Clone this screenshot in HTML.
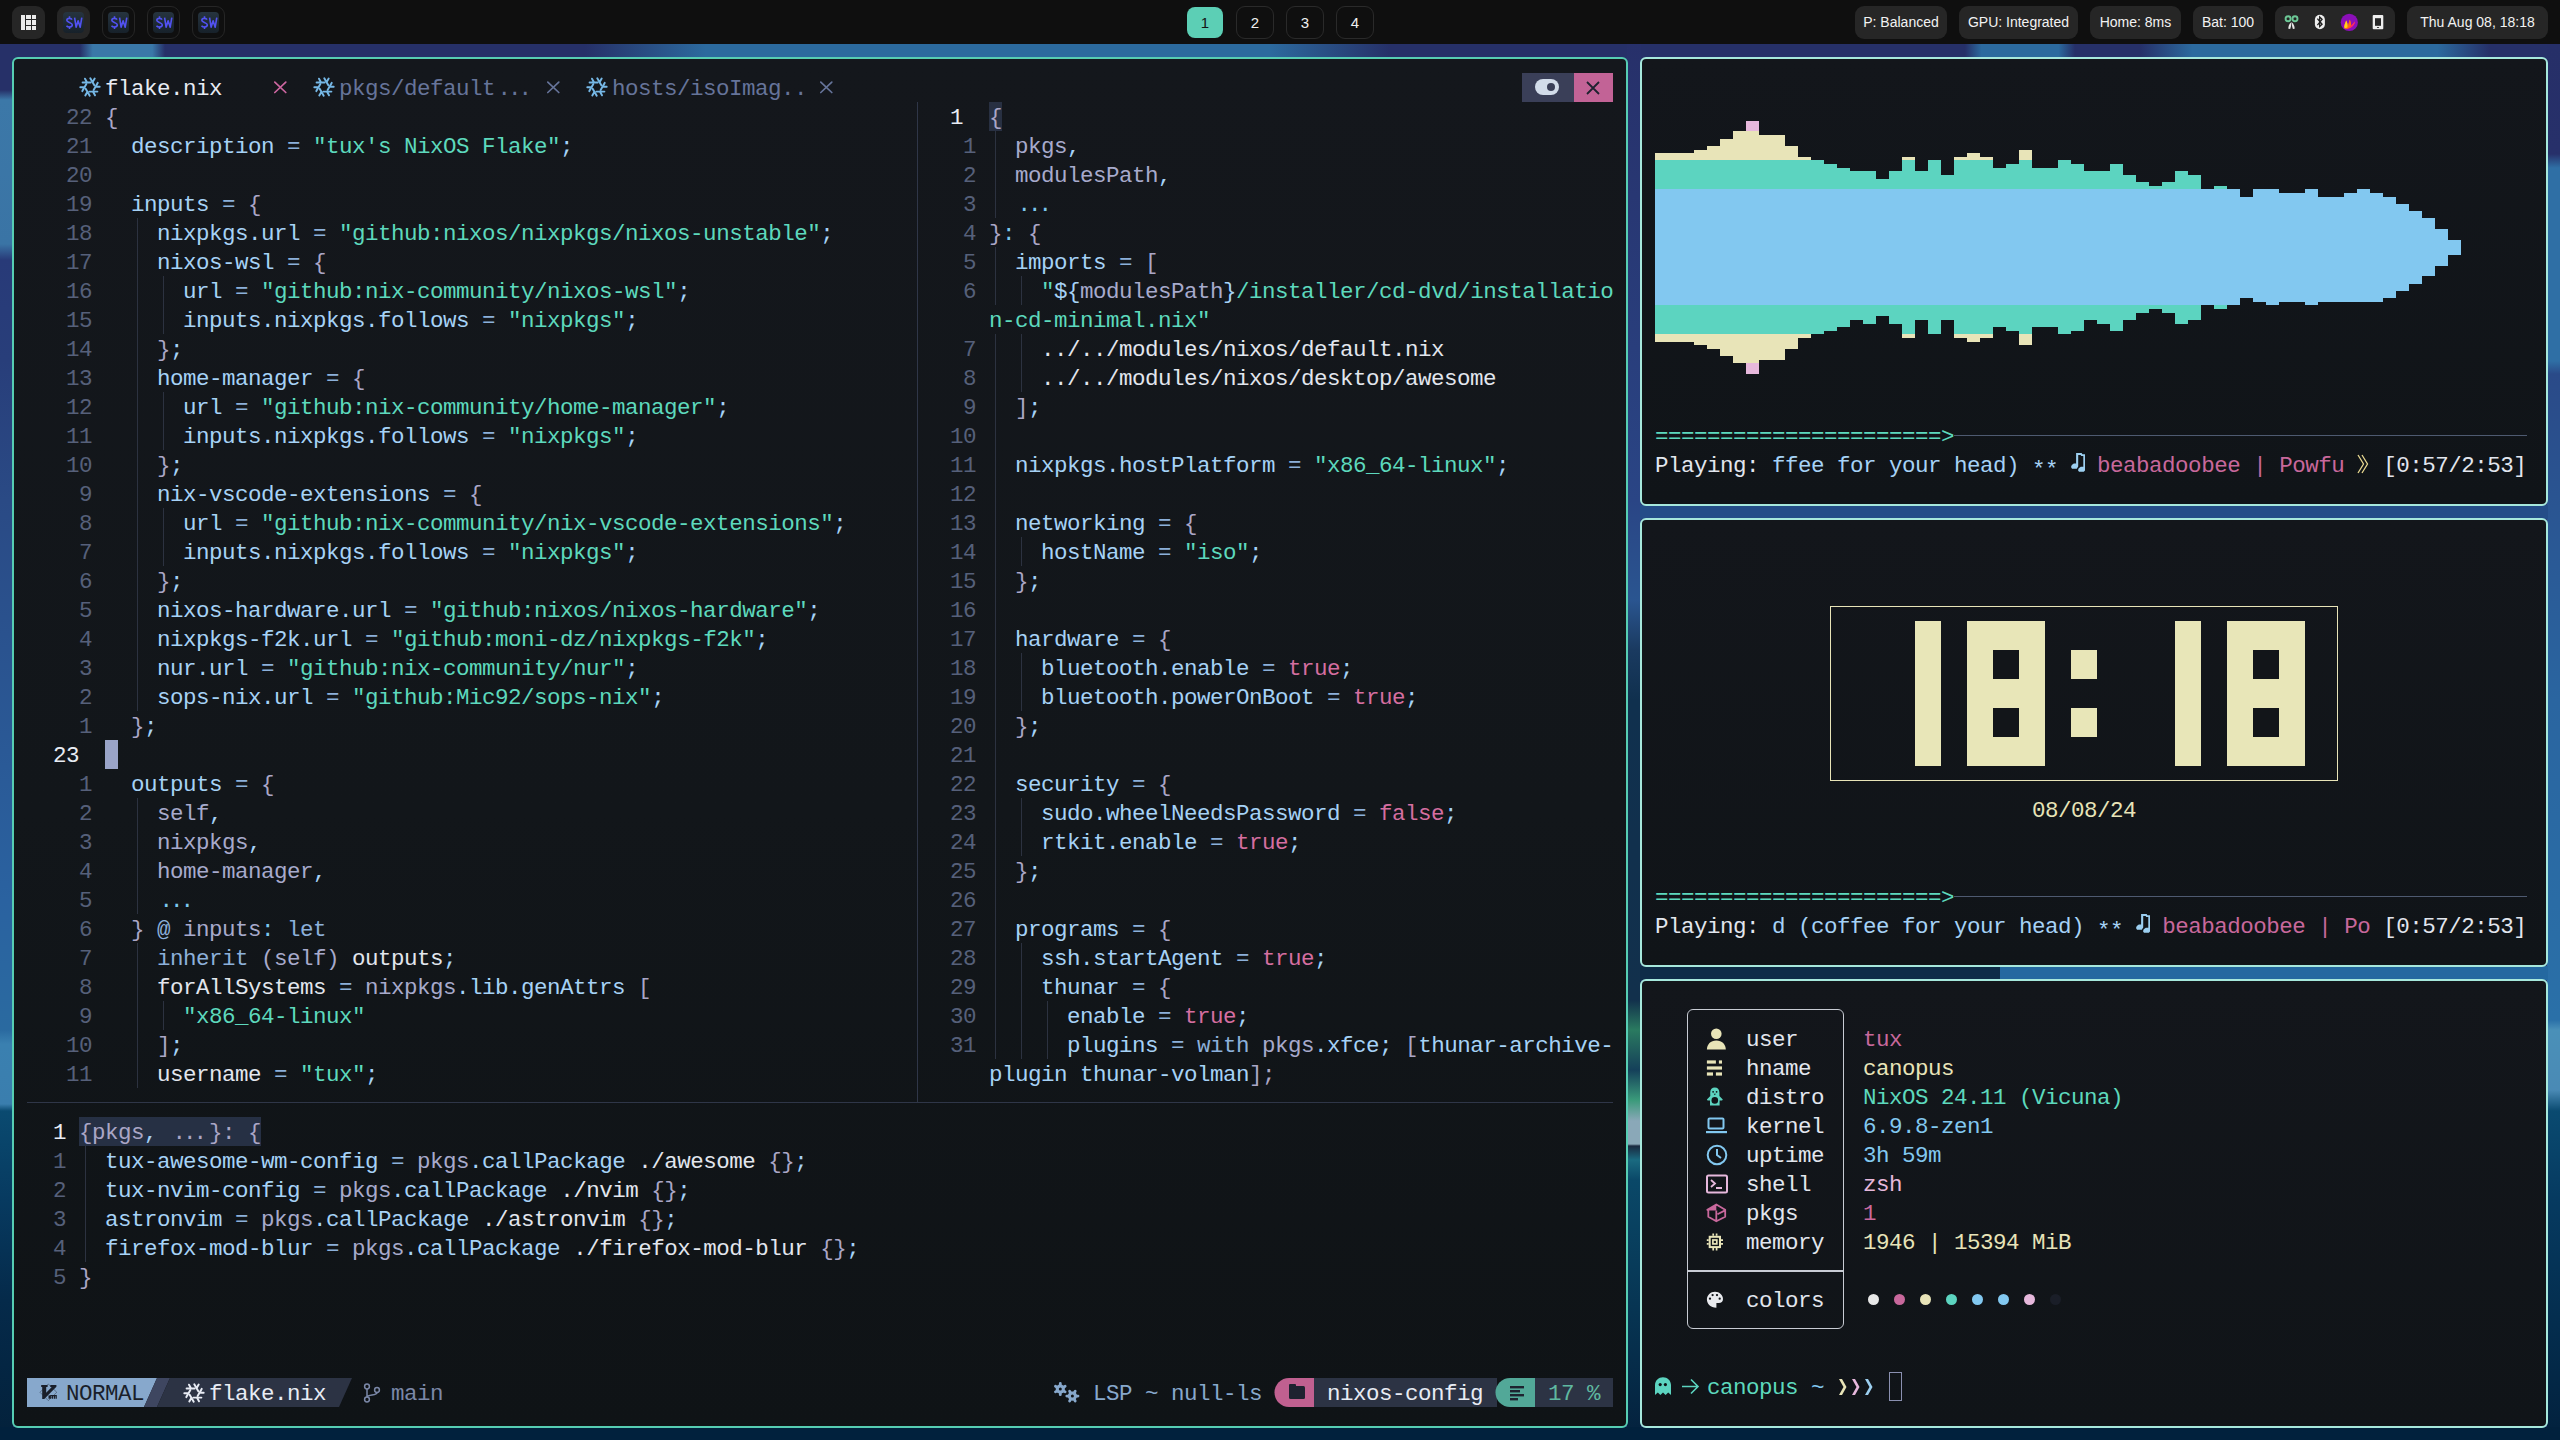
<!DOCTYPE html>
<html><head><meta charset="utf-8"><style>
*{margin:0;padding:0;box-sizing:border-box}
html,body{width:2560px;height:1440px;overflow:hidden;background:#0f0f0f}
body{position:relative;font-family:"Liberation Mono",monospace}
.tx{position:absolute;white-space:pre;font-size:22.5px;letter-spacing:-0.5px;padding-top:1.5px;line-height:29px;height:29px;font-family:"Liberation Mono",monospace}
.win{position:absolute;border:2px solid #56cdb3;border-radius:6px;background:#121519;overflow:hidden}
.sans{font-family:"Liberation Sans",sans-serif}
.lig{padding-left:2.5px;letter-spacing:-3px;margin-right:5px}
.X{color:#a6d2f6;position:relative;top:4px}
.a{color:#a6d2f6}.p{color:#a7aacc}.s{color:#5dd9bd}.o{color:#8cb0da}.b{color:#aaa6c6}.q{color:#d56ea0}.w{color:#e2e6ee}.e{color:#7cc8ee}.n{color:#56607a}.c{color:#e8ecf4}.y{color:#e8e4b8}.k{color:#c8689c}.l{color:#e6b8dc}.u{color:#82c8f0}.g{color:#7b88a8}.d{color:#1a1f2a}.v{color:#87a8cc}.G{color:#66749a}.z{color:#5fb8a0}</style></head>
<body>
<div style="position:absolute;left:0;top:44px;width:2560px;height:1396px;background:#263068"></div>
<div style="position:absolute;left:80px;top:44px;width:85px;height:14px;background:linear-gradient(90deg,#263068,#3a78a8 15%,#3a78a8 85%,#263068);"></div>
<div style="position:absolute;left:585px;top:44px;width:805px;height:14px;background:linear-gradient(90deg,#263068,#2c6a9e 15%,#2c6a9e 85%,#263068);"></div>
<div style="position:absolute;left:1965px;top:44px;width:110px;height:14px;background:linear-gradient(90deg,#263068,#2c6a9e 15%,#2c6a9e 85%,#263068);"></div>
<div style="position:absolute;left:2140px;top:44px;width:350px;height:14px;background:linear-gradient(90deg,#263068,#2c6a9e 15%,#2c6a9e 85%,#263068);"></div>
<div style="position:absolute;left:0px;top:44px;width:13px;height:1396px;background:linear-gradient(180deg,#263068 0px,#263068 46px,#3c78a8 56px,#3a74a5 200px,#283a78 216px,#283e7a 316px,#2a4a85 456px,#2a62a0 856px,#2a6aa0 986px,#3a80b0 1000px,#3a7eae 1060px,#0a4a70 1067px,#073a60 1156px,#052a4a 1256px,#03213b 1396px);"></div>
<div style="position:absolute;left:1627px;top:44px;width:14px;height:1396px;background:linear-gradient(180deg,#27306a 0px,#2a4585 456px,#2a5590 556px,#1a3a60 606px,#10304e 656px,#12304c 956px,#2a7a60 986px,#15405a 1026px,#3a9a7a 1056px,#8aa8b8 1077px,#8aa8b8 1100px,#1a2a40 1102px,#1a6a80 1116px,#0a4868 1136px,#04213d 1396px);"></div>
<div style="position:absolute;left:2547px;top:44px;width:13px;height:1396px;background:linear-gradient(180deg,#262f68 0px,#27306a 110px,#2f6fa5 124px,#2f6fa5 317px,#2a4a88 330px,#2a65a0 656px,#2a70a8 976px,#4a90b8 986px,#4a8ab5 1046px,#0a4a70 1067px,#063a60 1156px,#02213d 1396px);"></div>
<div style="position:absolute;left:1640px;top:505px;width:908px;height:14px;background:#244d88;"></div>
<div style="position:absolute;left:1640px;top:966px;width:360px;height:14px;background:#0e2c48;"></div>
<div style="position:absolute;left:2000px;top:966px;width:548px;height:14px;background:#2468a0;"></div>
<div style="position:absolute;left:0px;top:1427px;width:2560px;height:13px;background:#01213d;"></div>
<div style="position:absolute;left:0;top:0;width:2560px;height:44px;background:#0f0f0f"></div>
<div style="position:absolute;left:12px;top:6px;width:33px;height:33px;border-radius:9px;background:#262626"></div>
<div style="position:absolute;left:20.7px;top:14.8px;width:4.4px;height:15.4px;background:#ececec;"></div>
<div style="position:absolute;left:26.1px;top:14.8px;width:4.8px;height:4.6px;background:#ececec;"></div>
<div style="position:absolute;left:31.8px;top:14.8px;width:4.5px;height:4.6px;background:#ececec;"></div>
<div style="position:absolute;left:26.1px;top:20.4px;width:4.8px;height:4.6px;background:#ececec;"></div>
<div style="position:absolute;left:31.8px;top:20.4px;width:4.5px;height:4.6px;background:#ececec;"></div>
<div style="position:absolute;left:26.1px;top:25.8px;width:4.8px;height:4.6px;background:#ececec;"></div>
<div style="position:absolute;left:31.8px;top:25.8px;width:4.5px;height:4.6px;background:#ececec;"></div>
<div style="position:absolute;left:57px;top:6px;width:33px;height:33px;border-radius:9px;background:#262626"></div>
<div style="position:absolute;left:63px;top:12px;width:21px;height:21px;border-radius:4px;background:linear-gradient(180deg,#26343f,#17212a)"></div>
<svg style="position:absolute;left:63px;top:12px" width="21" height="21" viewBox="0 0 21 21"><path d="M9 7.6 C8.2 5.9 4 5.8 3.8 8.3 C3.6 10.6 9.2 10.2 9.3 12.8 C9.4 15.4 4.9 15.5 3.5 13.7 M6.5 4.3 V6.1 M6.5 15.1 V17" fill="none" stroke="#5252f2" stroke-width="1.6"/><path d="M11.6 5.6 L13.1 15.2 L15.1 8.8 L17.2 15.2 L18.8 5.6" fill="none" stroke="#5252f2" stroke-width="1.6" stroke-linejoin="round"/></svg>
<div style="position:absolute;left:102px;top:6px;width:33px;height:33px;border-radius:9px;border:1px solid #262626"></div>
<div style="position:absolute;left:108px;top:12px;width:21px;height:21px;border-radius:4px;background:linear-gradient(180deg,#26343f,#17212a)"></div>
<svg style="position:absolute;left:108px;top:12px" width="21" height="21" viewBox="0 0 21 21"><path d="M9 7.6 C8.2 5.9 4 5.8 3.8 8.3 C3.6 10.6 9.2 10.2 9.3 12.8 C9.4 15.4 4.9 15.5 3.5 13.7 M6.5 4.3 V6.1 M6.5 15.1 V17" fill="none" stroke="#5252f2" stroke-width="1.6"/><path d="M11.6 5.6 L13.1 15.2 L15.1 8.8 L17.2 15.2 L18.8 5.6" fill="none" stroke="#5252f2" stroke-width="1.6" stroke-linejoin="round"/></svg>
<div style="position:absolute;left:147px;top:6px;width:33px;height:33px;border-radius:9px;border:1px solid #262626"></div>
<div style="position:absolute;left:153px;top:12px;width:21px;height:21px;border-radius:4px;background:linear-gradient(180deg,#26343f,#17212a)"></div>
<svg style="position:absolute;left:153px;top:12px" width="21" height="21" viewBox="0 0 21 21"><path d="M9 7.6 C8.2 5.9 4 5.8 3.8 8.3 C3.6 10.6 9.2 10.2 9.3 12.8 C9.4 15.4 4.9 15.5 3.5 13.7 M6.5 4.3 V6.1 M6.5 15.1 V17" fill="none" stroke="#5252f2" stroke-width="1.6"/><path d="M11.6 5.6 L13.1 15.2 L15.1 8.8 L17.2 15.2 L18.8 5.6" fill="none" stroke="#5252f2" stroke-width="1.6" stroke-linejoin="round"/></svg>
<div style="position:absolute;left:192px;top:6px;width:33px;height:33px;border-radius:9px;border:1px solid #262626"></div>
<div style="position:absolute;left:198px;top:12px;width:21px;height:21px;border-radius:4px;background:linear-gradient(180deg,#26343f,#17212a)"></div>
<svg style="position:absolute;left:198px;top:12px" width="21" height="21" viewBox="0 0 21 21"><path d="M9 7.6 C8.2 5.9 4 5.8 3.8 8.3 C3.6 10.6 9.2 10.2 9.3 12.8 C9.4 15.4 4.9 15.5 3.5 13.7 M6.5 4.3 V6.1 M6.5 15.1 V17" fill="none" stroke="#5252f2" stroke-width="1.6"/><path d="M11.6 5.6 L13.1 15.2 L15.1 8.8 L17.2 15.2 L18.8 5.6" fill="none" stroke="#5252f2" stroke-width="1.6" stroke-linejoin="round"/></svg>
<div class="sans" style="position:absolute;left:1187px;top:7px;width:36px;height:31px;border-radius:8px;background:#5ccfb5;color:#151515;font-size:15px;line-height:31px;text-align:center">1</div>
<div class="sans" style="position:absolute;left:1236px;top:6px;width:38px;height:33px;border-radius:9px;border:1px solid #2a2a2a;color:#f0f0f0;font-size:15px;line-height:31px;text-align:center">2</div>
<div class="sans" style="position:absolute;left:1286px;top:6px;width:38px;height:33px;border-radius:9px;border:1px solid #2a2a2a;color:#f0f0f0;font-size:15px;line-height:31px;text-align:center">3</div>
<div class="sans" style="position:absolute;left:1336px;top:6px;width:38px;height:33px;border-radius:9px;border:1px solid #2a2a2a;color:#f0f0f0;font-size:15px;line-height:31px;text-align:center">4</div>
<div class="sans" style="position:absolute;left:1855px;top:6px;width:92px;height:33px;border-radius:9px;background:#262626;color:#f2f2f2;font-size:14px;line-height:32px;text-align:center">P: Balanced</div>
<div class="sans" style="position:absolute;left:1959px;top:6px;width:119px;height:33px;border-radius:9px;background:#262626;color:#f2f2f2;font-size:14px;line-height:32px;text-align:center">GPU: Integrated</div>
<div class="sans" style="position:absolute;left:2090px;top:6px;width:91px;height:33px;border-radius:9px;background:#262626;color:#f2f2f2;font-size:14px;line-height:32px;text-align:center">Home: 8ms</div>
<div class="sans" style="position:absolute;left:2193px;top:6px;width:70px;height:33px;border-radius:9px;background:#262626;color:#f2f2f2;font-size:14px;line-height:32px;text-align:center">Bat: 100</div>
<div class="sans" style="position:absolute;left:2407px;top:6px;width:141px;height:33px;border-radius:9px;background:#262626;color:#f2f2f2;font-size:14px;line-height:32px;text-align:center">Thu Aug 08, 18:18</div>
<div style="position:absolute;left:2275px;top:6px;width:120px;height:33px;border-radius:9px;background:#262626"></div>
<svg style="position:absolute;left:2275px;top:6px" width="120" height="34" viewBox="0 0 120 34">
<circle cx="13.1" cy="12.7" r="2.5" fill="none" stroke="#6cc896" stroke-width="1.9"/><circle cx="20" cy="12.7" r="2.5" fill="none" stroke="#6cc896" stroke-width="1.9"/>
<path d="M13.3 22.8 Q13.2 18.6 16.4 15.9 Q16.4 19.6 15.2 22.9 Z" fill="#e6e6e6"/><path d="M19.6 22.8 Q19.8 18.8 16.6 15.9 Q16.8 19.8 17.9 22.9 Z" fill="#e6e6e6"/>
<rect x="39.9" y="8.7" width="10" height="14.5" rx="5" fill="#eeeeee"/>
<path d="M42.4 12.6 L47.1 18.3 L44.7 20.6 V11 L47.1 13.4 L42.4 19.2" fill="none" stroke="#1e1e1e" stroke-width="1.3"/>
<circle cx="74.3" cy="16.4" r="8.6" fill="#8b0fb8"/>
<path d="M69.6 22.6 C68.6 20 70 17.5 71.2 14.5 C72.3 16.4 72.8 18 72.6 20 C73.6 18 74 15.6 74.6 13.6 C76.1 15.6 76.3 18 75.9 19.8 C77.3 18.6 78.6 17 79.8 15.5 C79.6 19.5 76.5 22 72 22.9 Z" fill="#ff6a10"/>
<path d="M69.6 22.6 C68.6 20 70 17.5 71.2 14.5 C72.3 16.4 72.9 18.6 72.4 21.5 Z" fill="#ffd21a"/>
<path d="M75.5 20.2 C77 18.8 78.6 17 79.8 15.5 C79.6 19.2 77 21.6 73.5 22.5 Z" fill="#ff1a78"/>
<rect x="97.7" y="8.9" width="10.6" height="14.3" rx="1" fill="#eeeeee"/>
<rect x="100" y="12.2" width="6" height="7.6" fill="#262626"/><ellipse cx="103" cy="21.5" rx="1.2" ry="0.6" fill="#262626"/>
</svg>
<div class="win" style="left:12px;top:57px;width:1616px;height:1371px;border-color:#56cdb3;background:linear-gradient(180deg,#14171c,#12161a 55%,#0f1316)"></div>
<div class="win" style="left:1640px;top:57px;width:908px;height:449px;border-color:#a6e8dc;background:linear-gradient(180deg,#13161b,#101418)"></div>
<div class="win" style="left:1640px;top:518px;width:908px;height:449px;border-color:#a6e8dc;background:linear-gradient(180deg,#13161b,#101418)"></div>
<div class="win" style="left:1640px;top:979px;width:908px;height:449px;border-color:#a6e8dc;background:linear-gradient(180deg,#13161b,#101418)"></div>
<div style="position:absolute;left:137px;top:218px;width:1px;height:493px;background:#2c3240;"></div>
<div style="position:absolute;left:163px;top:276px;width:1px;height:58px;background:#2c3240;"></div>
<div style="position:absolute;left:163px;top:392px;width:1px;height:58px;background:#2c3240;"></div>
<div style="position:absolute;left:163px;top:508px;width:1px;height:58px;background:#2c3240;"></div>
<div style="position:absolute;left:137px;top:798px;width:1px;height:116px;background:#2c3240;"></div>
<div style="position:absolute;left:137px;top:943px;width:1px;height:145px;background:#2c3240;"></div>
<div style="position:absolute;left:163px;top:1001px;width:1px;height:29px;background:#2c3240;"></div>
<div style="position:absolute;left:995px;top:131px;width:1px;height:87px;background:#2c3240;"></div>
<div style="position:absolute;left:995px;top:247px;width:1px;height:58px;background:#2c3240;"></div>
<div style="position:absolute;left:995px;top:334px;width:1px;height:725px;background:#2c3240;"></div>
<div style="position:absolute;left:1021px;top:276px;width:1px;height:29px;background:#2c3240;"></div>
<div style="position:absolute;left:1021px;top:334px;width:1px;height:58px;background:#2c3240;"></div>
<div style="position:absolute;left:1021px;top:537px;width:1px;height:29px;background:#2c3240;"></div>
<div style="position:absolute;left:1021px;top:653px;width:1px;height:58px;background:#2c3240;"></div>
<div style="position:absolute;left:1021px;top:798px;width:1px;height:58px;background:#2c3240;"></div>
<div style="position:absolute;left:1021px;top:943px;width:1px;height:116px;background:#2c3240;"></div>
<div style="position:absolute;left:1047px;top:1001px;width:1px;height:58px;background:#2c3240;"></div>
<div style="position:absolute;left:85px;top:1146px;width:1px;height:116px;background:#2c3240;"></div>
<div style="position:absolute;left:917px;top:102px;width:1px;height:1000px;background:#2f3648;"></div>
<div style="position:absolute;left:27px;top:1102px;width:1586px;height:1px;background:#2f3648;"></div>
<div style="position:absolute;left:989px;top:102px;width:13px;height:29px;background:#283042;"></div>
<div style="position:absolute;left:79px;top:1117px;width:182px;height:29px;background:#263044;"></div>
<div style="position:absolute;left:105px;top:740px;width:13px;height:29px;background:#9aa4c8;"></div>
<div class="tx" style="left:66px;top:102px"><span class="n">22</span></div>
<div class="tx" style="left:105px;top:102px"><span class="b">{</span></div>
<div class="tx" style="left:66px;top:131px"><span class="n">21</span></div>
<div class="tx" style="left:105px;top:131px">  <span class="a">description </span><span class="o">= </span><span class="s">"tux's NixOS Flake"</span><span class="a">;</span></div>
<div class="tx" style="left:66px;top:160px"><span class="n">20</span></div>
<div class="tx" style="left:66px;top:189px"><span class="n">19</span></div>
<div class="tx" style="left:105px;top:189px">  <span class="a">inputs </span><span class="o">= </span><span class="b">{</span></div>
<div class="tx" style="left:66px;top:218px"><span class="n">18</span></div>
<div class="tx" style="left:105px;top:218px">    <span class="a">nixpkgs.url </span><span class="o">= </span><span class="s">"github:nixos/nixpkgs/nixos-unstable"</span><span class="a">;</span></div>
<div class="tx" style="left:66px;top:247px"><span class="n">17</span></div>
<div class="tx" style="left:105px;top:247px">    <span class="a">nixos-wsl </span><span class="o">= </span><span class="b">{</span></div>
<div class="tx" style="left:66px;top:276px"><span class="n">16</span></div>
<div class="tx" style="left:105px;top:276px">      <span class="a">url </span><span class="o">= </span><span class="s">"github:nix-community/nixos-wsl"</span><span class="a">;</span></div>
<div class="tx" style="left:66px;top:305px"><span class="n">15</span></div>
<div class="tx" style="left:105px;top:305px">      <span class="a">inputs.nixpkgs.follows </span><span class="o">= </span><span class="s">"nixpkgs"</span><span class="a">;</span></div>
<div class="tx" style="left:66px;top:334px"><span class="n">14</span></div>
<div class="tx" style="left:105px;top:334px">    <span class="b">}</span><span class="a">;</span></div>
<div class="tx" style="left:66px;top:363px"><span class="n">13</span></div>
<div class="tx" style="left:105px;top:363px">    <span class="a">home-manager </span><span class="o">= </span><span class="b">{</span></div>
<div class="tx" style="left:66px;top:392px"><span class="n">12</span></div>
<div class="tx" style="left:105px;top:392px">      <span class="a">url </span><span class="o">= </span><span class="s">"github:nix-community/home-manager"</span><span class="a">;</span></div>
<div class="tx" style="left:66px;top:421px"><span class="n">11</span></div>
<div class="tx" style="left:105px;top:421px">      <span class="a">inputs.nixpkgs.follows </span><span class="o">= </span><span class="s">"nixpkgs"</span><span class="a">;</span></div>
<div class="tx" style="left:66px;top:450px"><span class="n">10</span></div>
<div class="tx" style="left:105px;top:450px">    <span class="b">}</span><span class="a">;</span></div>
<div class="tx" style="left:79px;top:479px"><span class="n">9</span></div>
<div class="tx" style="left:105px;top:479px">    <span class="a">nix-vscode-extensions </span><span class="o">= </span><span class="b">{</span></div>
<div class="tx" style="left:79px;top:508px"><span class="n">8</span></div>
<div class="tx" style="left:105px;top:508px">      <span class="a">url </span><span class="o">= </span><span class="s">"github:nix-community/nix-vscode-extensions"</span><span class="a">;</span></div>
<div class="tx" style="left:79px;top:537px"><span class="n">7</span></div>
<div class="tx" style="left:105px;top:537px">      <span class="a">inputs.nixpkgs.follows </span><span class="o">= </span><span class="s">"nixpkgs"</span><span class="a">;</span></div>
<div class="tx" style="left:79px;top:566px"><span class="n">6</span></div>
<div class="tx" style="left:105px;top:566px">    <span class="b">}</span><span class="a">;</span></div>
<div class="tx" style="left:79px;top:595px"><span class="n">5</span></div>
<div class="tx" style="left:105px;top:595px">    <span class="a">nixos-hardware.url </span><span class="o">= </span><span class="s">"github:nixos/nixos-hardware"</span><span class="a">;</span></div>
<div class="tx" style="left:79px;top:624px"><span class="n">4</span></div>
<div class="tx" style="left:105px;top:624px">    <span class="a">nixpkgs-f2k.url </span><span class="o">= </span><span class="s">"github:moni-dz/nixpkgs-f2k"</span><span class="a">;</span></div>
<div class="tx" style="left:79px;top:653px"><span class="n">3</span></div>
<div class="tx" style="left:105px;top:653px">    <span class="a">nur.url </span><span class="o">= </span><span class="s">"github:nix-community/nur"</span><span class="a">;</span></div>
<div class="tx" style="left:79px;top:682px"><span class="n">2</span></div>
<div class="tx" style="left:105px;top:682px">    <span class="a">sops-nix.url </span><span class="o">= </span><span class="s">"github:Mic92/sops-nix"</span><span class="a">;</span></div>
<div class="tx" style="left:79px;top:711px"><span class="n">1</span></div>
<div class="tx" style="left:105px;top:711px">  <span class="b">}</span><span class="a">;</span></div>
<div class="tx" style="left:53px;top:740px"><span class="c">23</span></div>
<div class="tx" style="left:79px;top:769px"><span class="n">1</span></div>
<div class="tx" style="left:105px;top:769px">  <span class="a">outputs </span><span class="o">= </span><span class="b">{</span></div>
<div class="tx" style="left:79px;top:798px"><span class="n">2</span></div>
<div class="tx" style="left:105px;top:798px">    <span class="p">self</span><span class="a">,</span></div>
<div class="tx" style="left:79px;top:827px"><span class="n">3</span></div>
<div class="tx" style="left:105px;top:827px">    <span class="p">nixpkgs</span><span class="a">,</span></div>
<div class="tx" style="left:79px;top:856px"><span class="n">4</span></div>
<div class="tx" style="left:105px;top:856px">    <span class="p">home-manager</span><span class="a">,</span></div>
<div class="tx" style="left:79px;top:885px"><span class="n">5</span></div>
<div class="tx" style="left:105px;top:885px">    <span class="e"><span class="lig">...</span></span></div>
<div class="tx" style="left:79px;top:914px"><span class="n">6</span></div>
<div class="tx" style="left:105px;top:914px">  <span class="b">} </span><span class="o">@ </span><span class="p">inputs</span><span class="e">: </span><span class="o">let</span></div>
<div class="tx" style="left:79px;top:943px"><span class="n">7</span></div>
<div class="tx" style="left:105px;top:943px">    <span class="o">inherit </span><span class="p">(self) </span><span class="w">outputs</span><span class="a">;</span></div>
<div class="tx" style="left:79px;top:972px"><span class="n">8</span></div>
<div class="tx" style="left:105px;top:972px">    <span class="w">forAllSystems </span><span class="o">= </span><span class="p">nixpkgs</span><span class="a">.lib.genAttrs </span><span class="b">[</span></div>
<div class="tx" style="left:79px;top:1001px"><span class="n">9</span></div>
<div class="tx" style="left:105px;top:1001px">      <span class="s">"x86_64-linux"</span></div>
<div class="tx" style="left:66px;top:1030px"><span class="n">10</span></div>
<div class="tx" style="left:105px;top:1030px">    <span class="b">]</span><span class="a">;</span></div>
<div class="tx" style="left:66px;top:1059px"><span class="n">11</span></div>
<div class="tx" style="left:105px;top:1059px">    <span class="w">username </span><span class="o">= </span><span class="s">"tux"</span><span class="a">;</span></div>
<div class="tx" style="left:950px;top:102px"><span class="c">1</span></div>
<div class="tx" style="left:989px;top:102px"><span class="b">{</span></div>
<div class="tx" style="left:963px;top:131px"><span class="n">1</span></div>
<div class="tx" style="left:989px;top:131px">  <span class="p">pkgs</span><span class="a">,</span></div>
<div class="tx" style="left:963px;top:160px"><span class="n">2</span></div>
<div class="tx" style="left:989px;top:160px">  <span class="p">modulesPath</span><span class="a">,</span></div>
<div class="tx" style="left:963px;top:189px"><span class="n">3</span></div>
<div class="tx" style="left:989px;top:189px">  <span class="e"><span class="lig">...</span></span></div>
<div class="tx" style="left:963px;top:218px"><span class="n">4</span></div>
<div class="tx" style="left:989px;top:218px"><span class="b">}</span><span class="e">: </span><span class="b">{</span></div>
<div class="tx" style="left:963px;top:247px"><span class="n">5</span></div>
<div class="tx" style="left:989px;top:247px">  <span class="a">imports </span><span class="o">= </span><span class="b">[</span></div>
<div class="tx" style="left:963px;top:276px"><span class="n">6</span></div>
<div class="tx" style="left:989px;top:276px">    <span class="s">"</span><span class="a">${</span><span class="p">modulesPath</span><span class="a">}</span><span class="s">/installer/cd-dvd/installatio</span></div>
<div class="tx" style="left:989px;top:305px"><span class="s">n-cd-minimal.nix"</span></div>
<div class="tx" style="left:963px;top:334px"><span class="n">7</span></div>
<div class="tx" style="left:989px;top:334px">    <span class="w">../../modules/nixos/default.nix</span></div>
<div class="tx" style="left:963px;top:363px"><span class="n">8</span></div>
<div class="tx" style="left:989px;top:363px">    <span class="w">../../modules/nixos/desktop/awesome</span></div>
<div class="tx" style="left:963px;top:392px"><span class="n">9</span></div>
<div class="tx" style="left:989px;top:392px">  <span class="b">]</span><span class="a">;</span></div>
<div class="tx" style="left:950px;top:421px"><span class="n">10</span></div>
<div class="tx" style="left:950px;top:450px"><span class="n">11</span></div>
<div class="tx" style="left:989px;top:450px">  <span class="a">nixpkgs.hostPlatform </span><span class="o">= </span><span class="s">"x86_64-linux"</span><span class="a">;</span></div>
<div class="tx" style="left:950px;top:479px"><span class="n">12</span></div>
<div class="tx" style="left:950px;top:508px"><span class="n">13</span></div>
<div class="tx" style="left:989px;top:508px">  <span class="a">networking </span><span class="o">= </span><span class="b">{</span></div>
<div class="tx" style="left:950px;top:537px"><span class="n">14</span></div>
<div class="tx" style="left:989px;top:537px">    <span class="a">hostName </span><span class="o">= </span><span class="s">"iso"</span><span class="a">;</span></div>
<div class="tx" style="left:950px;top:566px"><span class="n">15</span></div>
<div class="tx" style="left:989px;top:566px">  <span class="b">}</span><span class="a">;</span></div>
<div class="tx" style="left:950px;top:595px"><span class="n">16</span></div>
<div class="tx" style="left:950px;top:624px"><span class="n">17</span></div>
<div class="tx" style="left:989px;top:624px">  <span class="a">hardware </span><span class="o">= </span><span class="b">{</span></div>
<div class="tx" style="left:950px;top:653px"><span class="n">18</span></div>
<div class="tx" style="left:989px;top:653px">    <span class="a">bluetooth.enable </span><span class="o">= </span><span class="q">true</span><span class="a">;</span></div>
<div class="tx" style="left:950px;top:682px"><span class="n">19</span></div>
<div class="tx" style="left:989px;top:682px">    <span class="a">bluetooth.powerOnBoot </span><span class="o">= </span><span class="q">true</span><span class="a">;</span></div>
<div class="tx" style="left:950px;top:711px"><span class="n">20</span></div>
<div class="tx" style="left:989px;top:711px">  <span class="b">}</span><span class="a">;</span></div>
<div class="tx" style="left:950px;top:740px"><span class="n">21</span></div>
<div class="tx" style="left:950px;top:769px"><span class="n">22</span></div>
<div class="tx" style="left:989px;top:769px">  <span class="a">security </span><span class="o">= </span><span class="b">{</span></div>
<div class="tx" style="left:950px;top:798px"><span class="n">23</span></div>
<div class="tx" style="left:989px;top:798px">    <span class="a">sudo.wheelNeedsPassword </span><span class="o">= </span><span class="q">false</span><span class="a">;</span></div>
<div class="tx" style="left:950px;top:827px"><span class="n">24</span></div>
<div class="tx" style="left:989px;top:827px">    <span class="a">rtkit.enable </span><span class="o">= </span><span class="q">true</span><span class="a">;</span></div>
<div class="tx" style="left:950px;top:856px"><span class="n">25</span></div>
<div class="tx" style="left:989px;top:856px">  <span class="b">}</span><span class="a">;</span></div>
<div class="tx" style="left:950px;top:885px"><span class="n">26</span></div>
<div class="tx" style="left:950px;top:914px"><span class="n">27</span></div>
<div class="tx" style="left:989px;top:914px">  <span class="a">programs </span><span class="o">= </span><span class="b">{</span></div>
<div class="tx" style="left:950px;top:943px"><span class="n">28</span></div>
<div class="tx" style="left:989px;top:943px">    <span class="a">ssh.startAgent </span><span class="o">= </span><span class="q">true</span><span class="a">;</span></div>
<div class="tx" style="left:950px;top:972px"><span class="n">29</span></div>
<div class="tx" style="left:989px;top:972px">    <span class="a">thunar </span><span class="o">= </span><span class="b">{</span></div>
<div class="tx" style="left:950px;top:1001px"><span class="n">30</span></div>
<div class="tx" style="left:989px;top:1001px">      <span class="a">enable </span><span class="o">= </span><span class="q">true</span><span class="a">;</span></div>
<div class="tx" style="left:950px;top:1030px"><span class="n">31</span></div>
<div class="tx" style="left:989px;top:1030px">      <span class="a">plugins </span><span class="o">= </span><span class="o">with </span><span class="p">pkgs</span><span class="a">.xfce; </span><span class="b">[</span><span class="a">thunar-archive-</span></div>
<div class="tx" style="left:989px;top:1059px"><span class="a">plugin thunar-volman</span><span class="b">];</span></div>
<div class="tx" style="left:53px;top:1117px"><span class="c">1</span></div>
<div class="tx" style="left:79px;top:1117px"><span class="b">{pkgs</span><span class="a">, </span><span class="b"><span class="lig">...</span>}: {</span></div>
<div class="tx" style="left:53px;top:1146px"><span class="n">1</span></div>
<div class="tx" style="left:79px;top:1146px">  <span class="a">tux-awesome-wm-config </span><span class="o">= </span><span class="p">pkgs</span><span class="a">.callPackage </span><span class="w">./awesome </span><span class="b">{}</span><span class="a">;</span></div>
<div class="tx" style="left:53px;top:1175px"><span class="n">2</span></div>
<div class="tx" style="left:79px;top:1175px">  <span class="a">tux-nvim-config </span><span class="o">= </span><span class="p">pkgs</span><span class="a">.callPackage </span><span class="w">./nvim </span><span class="b">{}</span><span class="a">;</span></div>
<div class="tx" style="left:53px;top:1204px"><span class="n">3</span></div>
<div class="tx" style="left:79px;top:1204px">  <span class="a">astronvim </span><span class="o">= </span><span class="p">pkgs</span><span class="a">.callPackage </span><span class="w">./astronvim </span><span class="b">{}</span><span class="a">;</span></div>
<div class="tx" style="left:53px;top:1233px"><span class="n">4</span></div>
<div class="tx" style="left:79px;top:1233px">  <span class="a">firefox-mod-blur </span><span class="o">= </span><span class="p">pkgs</span><span class="a">.callPackage </span><span class="w">./firefox-mod-blur </span><span class="b">{}</span><span class="a">;</span></div>
<div class="tx" style="left:53px;top:1262px"><span class="n">5</span></div>
<div class="tx" style="left:79px;top:1262px"><span class="b">}</span></div>
<svg style="position:absolute;left:78.5px;top:76.3px" width="22" height="22" viewBox="-11 -11 22 22"><g transform="rotate(0)"><path d="M-7.4 -4.6 L0.7 -4.6 M-2.9 -4.6 L-5 -8.3" stroke="#76b8e6" stroke-width="1.95" stroke-linecap="round" fill="none"/></g><g transform="rotate(60)"><path d="M-7.4 -4.6 L0.7 -4.6 M-2.9 -4.6 L-5 -8.3" stroke="#76b8e6" stroke-width="1.95" stroke-linecap="round" fill="none"/></g><g transform="rotate(120)"><path d="M-7.4 -4.6 L0.7 -4.6 M-2.9 -4.6 L-5 -8.3" stroke="#76b8e6" stroke-width="1.95" stroke-linecap="round" fill="none"/></g><g transform="rotate(180)"><path d="M-7.4 -4.6 L0.7 -4.6 M-2.9 -4.6 L-5 -8.3" stroke="#76b8e6" stroke-width="1.95" stroke-linecap="round" fill="none"/></g><g transform="rotate(240)"><path d="M-7.4 -4.6 L0.7 -4.6 M-2.9 -4.6 L-5 -8.3" stroke="#76b8e6" stroke-width="1.95" stroke-linecap="round" fill="none"/></g><g transform="rotate(300)"><path d="M-7.4 -4.6 L0.7 -4.6 M-2.9 -4.6 L-5 -8.3" stroke="#76b8e6" stroke-width="1.95" stroke-linecap="round" fill="none"/></g></svg>
<div class="tx" style="left:105px;top:73px"><span class="c">flake.nix</span></div>
<svg style="position:absolute;left:268px;top:74px" width="28" height="28" viewBox="268 74 28 28"><path d="M274.8 82.2 L285.8 92.5 M285.8 82.2 L274.8 92.5" stroke="#cc66a0" stroke-width="1.7" stroke-linecap="round"/></svg>
<svg style="position:absolute;left:312.5px;top:76.3px" width="22" height="22" viewBox="-11 -11 22 22"><g transform="rotate(0)"><path d="M-7.4 -4.6 L0.7 -4.6 M-2.9 -4.6 L-5 -8.3" stroke="#76b8e6" stroke-width="1.95" stroke-linecap="round" fill="none"/></g><g transform="rotate(60)"><path d="M-7.4 -4.6 L0.7 -4.6 M-2.9 -4.6 L-5 -8.3" stroke="#76b8e6" stroke-width="1.95" stroke-linecap="round" fill="none"/></g><g transform="rotate(120)"><path d="M-7.4 -4.6 L0.7 -4.6 M-2.9 -4.6 L-5 -8.3" stroke="#76b8e6" stroke-width="1.95" stroke-linecap="round" fill="none"/></g><g transform="rotate(180)"><path d="M-7.4 -4.6 L0.7 -4.6 M-2.9 -4.6 L-5 -8.3" stroke="#76b8e6" stroke-width="1.95" stroke-linecap="round" fill="none"/></g><g transform="rotate(240)"><path d="M-7.4 -4.6 L0.7 -4.6 M-2.9 -4.6 L-5 -8.3" stroke="#76b8e6" stroke-width="1.95" stroke-linecap="round" fill="none"/></g><g transform="rotate(300)"><path d="M-7.4 -4.6 L0.7 -4.6 M-2.9 -4.6 L-5 -8.3" stroke="#76b8e6" stroke-width="1.95" stroke-linecap="round" fill="none"/></g></svg>
<div class="tx" style="left:339px;top:73px"><span class="G">pkgs/default<span class="lig">...</span></span></div>
<svg style="position:absolute;left:541px;top:74px" width="28" height="28" viewBox="268 74 28 28"><path d="M274.8 82.2 L285.8 92.5 M285.8 82.2 L274.8 92.5" stroke="#66749a" stroke-width="1.7" stroke-linecap="round"/></svg>
<svg style="position:absolute;left:585.5px;top:76.3px" width="22" height="22" viewBox="-11 -11 22 22"><g transform="rotate(0)"><path d="M-7.4 -4.6 L0.7 -4.6 M-2.9 -4.6 L-5 -8.3" stroke="#76b8e6" stroke-width="1.95" stroke-linecap="round" fill="none"/></g><g transform="rotate(60)"><path d="M-7.4 -4.6 L0.7 -4.6 M-2.9 -4.6 L-5 -8.3" stroke="#76b8e6" stroke-width="1.95" stroke-linecap="round" fill="none"/></g><g transform="rotate(120)"><path d="M-7.4 -4.6 L0.7 -4.6 M-2.9 -4.6 L-5 -8.3" stroke="#76b8e6" stroke-width="1.95" stroke-linecap="round" fill="none"/></g><g transform="rotate(180)"><path d="M-7.4 -4.6 L0.7 -4.6 M-2.9 -4.6 L-5 -8.3" stroke="#76b8e6" stroke-width="1.95" stroke-linecap="round" fill="none"/></g><g transform="rotate(240)"><path d="M-7.4 -4.6 L0.7 -4.6 M-2.9 -4.6 L-5 -8.3" stroke="#76b8e6" stroke-width="1.95" stroke-linecap="round" fill="none"/></g><g transform="rotate(300)"><path d="M-7.4 -4.6 L0.7 -4.6 M-2.9 -4.6 L-5 -8.3" stroke="#76b8e6" stroke-width="1.95" stroke-linecap="round" fill="none"/></g></svg>
<div class="tx" style="left:612px;top:73px"><span class="G">hosts/isoImag..</span></div>
<svg style="position:absolute;left:814px;top:74px" width="28" height="28" viewBox="268 74 28 28"><path d="M274.8 82.2 L285.8 92.5 M285.8 82.2 L274.8 92.5" stroke="#66749a" stroke-width="1.7" stroke-linecap="round"/></svg>
<div style="position:absolute;left:1522px;top:73px;width:52px;height:29px;background:#3a3f58;"></div>
<div style="position:absolute;left:1574px;top:73px;width:39px;height:29px;background:#c26396;"></div>
<div style="position:absolute;left:1535px;top:79px;width:24px;height:16px;border-radius:8px;background:#d2dcea"></div>
<div style="position:absolute;left:1547px;top:83px;width:8px;height:8px;border-radius:4px;background:#3a3f58"></div>
<svg style="position:absolute;left:1586px;top:81px" width="14" height="14" viewBox="0 0 14 14"><path d="M1 1 L13 13 M13 1 L1 13" stroke="#1e2230" stroke-width="1.8"/></svg>
<svg style="position:absolute;left:0;top:1378px" width="1628" height="29" viewBox="0 0 1628 29">
<polygon points="27,0 157,0 144,29 27,29" fill="#87a8cc"/>
<polygon points="157,0 170,0 157,29 144,29" fill="#3e4660"/>
<polygon points="170,0 352,0 339,29 157,29" fill="#2c3344"/>
<path d="M1289,0 H1314 V29 H1289 A14.5,14.5 0 0 1 1289,0 Z" fill="#c06090"/>
<rect x="1314" y="0" width="183" height="29" fill="#2c3344"/>
<path d="M1510,0 H1535 V29 H1510 A14.5,14.5 0 0 1 1510,0 Z" fill="#52a898"/>
<rect x="1535" y="0" width="78" height="29" fill="#2c3344"/>
<rect x="1289" y="8" width="16" height="13" rx="1.5" fill="#1e2230"/><rect x="1289" y="6" width="7" height="4" rx="1" fill="#1e2230"/>
<rect x="1510" y="8" width="14" height="2.4" fill="#1e2230"/><rect x="1510" y="12" width="10" height="2.4" fill="#1e2230"/>
<rect x="1510" y="16" width="14" height="2.4" fill="#1e2230"/><rect x="1510" y="20" width="8" height="2.4" fill="#1e2230"/>
</svg>
<svg style="position:absolute;left:30px;top:1378px" width="40" height="29" viewBox="0 0 40 29"><polygon points="10,14.3 18.3,6 26.8,14.3 18.3,22.6" fill="none" stroke="#1e2430" stroke-width="0.7" opacity="0.6"/><path d="M11.2 7 H17.6 V9 H16.2 V14.8 L21.8 9 H20.3 V7 H26.4 V8.8 L14.3 21 H12.2 V9 H11.2 Z" fill="#1a1f2a"/><rect x="18.5" y="17.4" width="1.5" height="3.3" fill="#1a1f2a"/><path d="M20.7 20.7 V17.6 H26.2 V20.7 M22.6 17.6 V20.7 M24.5 17.6 V20.7" fill="none" stroke="#1a1f2a" stroke-width="1.2"/></svg>
<div class="tx" style="left:66px;top:1378px"><span class="d">NORMAL</span></div>
<svg style="position:absolute;left:182.5px;top:1381.5px" width="22" height="22" viewBox="-11 -11 22 22"><g transform="rotate(0)"><path d="M-7.4 -4.6 L0.7 -4.6 M-2.9 -4.6 L-5 -8.3" stroke="#e8ecf4" stroke-width="1.95" stroke-linecap="round" fill="none"/></g><g transform="rotate(60)"><path d="M-7.4 -4.6 L0.7 -4.6 M-2.9 -4.6 L-5 -8.3" stroke="#e8ecf4" stroke-width="1.95" stroke-linecap="round" fill="none"/></g><g transform="rotate(120)"><path d="M-7.4 -4.6 L0.7 -4.6 M-2.9 -4.6 L-5 -8.3" stroke="#e8ecf4" stroke-width="1.95" stroke-linecap="round" fill="none"/></g><g transform="rotate(180)"><path d="M-7.4 -4.6 L0.7 -4.6 M-2.9 -4.6 L-5 -8.3" stroke="#e8ecf4" stroke-width="1.95" stroke-linecap="round" fill="none"/></g><g transform="rotate(240)"><path d="M-7.4 -4.6 L0.7 -4.6 M-2.9 -4.6 L-5 -8.3" stroke="#e8ecf4" stroke-width="1.95" stroke-linecap="round" fill="none"/></g><g transform="rotate(300)"><path d="M-7.4 -4.6 L0.7 -4.6 M-2.9 -4.6 L-5 -8.3" stroke="#e8ecf4" stroke-width="1.95" stroke-linecap="round" fill="none"/></g></svg>
<div class="tx" style="left:209px;top:1378px"><span class="c">flake.nix</span></div>
<svg style="position:absolute;left:363px;top:1383px" width="18" height="20" viewBox="0 0 18 20"><circle cx="4" cy="3.5" r="2.4" fill="none" stroke="#7b88a8" stroke-width="1.5"/><circle cx="4" cy="16.5" r="2.4" fill="none" stroke="#7b88a8" stroke-width="1.5"/><circle cx="14" cy="7" r="2.4" fill="none" stroke="#7b88a8" stroke-width="1.5"/><path d="M4 6 V14 M14 9.5 C14 13 5 11 4 14" fill="none" stroke="#7b88a8" stroke-width="1.5"/></svg>
<div class="tx" style="left:391px;top:1378px"><span class="g">main</span></div>
<svg style="position:absolute;left:1048px;top:1378px" width="36" height="30" viewBox="0 0 36 30"><circle cx="12.3" cy="11.1" r="4.6" fill="#87a8cc"/><path d="M12.30 7.30 L12.30 5.50 M15.59 9.20 L17.15 8.30 M15.59 13.00 L17.15 13.90 M12.30 14.90 L12.30 16.70 M9.01 13.00 L7.45 13.90 M9.01 9.20 L7.45 8.30 " stroke="#87a8cc" stroke-width="2.8" stroke-linecap="round"/><circle cx="12.3" cy="11.1" r="1.5" fill="#0f1316"/><circle cx="24.4" cy="18.1" r="4.6" fill="#87a8cc"/><path d="M26.30 14.81 L27.20 13.25 M28.20 18.10 L30.00 18.10 M26.30 21.39 L27.20 22.95 M22.50 21.39 L21.60 22.95 M20.60 18.10 L18.80 18.10 M22.50 14.81 L21.60 13.25 " stroke="#87a8cc" stroke-width="2.8" stroke-linecap="round"/><circle cx="24.4" cy="18.1" r="1.5" fill="#0f1316"/></svg>
<div class="tx" style="left:1093px;top:1378px"><span class="v">LSP ~ null-ls</span></div>
<div class="tx" style="left:1327px;top:1378px"><span class="c">nixos-config</span></div>
<div class="tx" style="left:1548px;top:1378px;color:#5fb8a0">17 %</div>
<svg style="position:absolute;left:0;top:0" width="2560" height="520" viewBox="0 0 2560 520">
<defs><clipPath id="cv"><rect x="1655" y="153" width="13" height="189"/><rect x="1668" y="153" width="13" height="189"/><rect x="1681" y="153" width="13" height="189"/><rect x="1694" y="150" width="13" height="195"/><rect x="1707" y="146" width="13" height="203"/><rect x="1720" y="139" width="13" height="217"/><rect x="1733" y="131" width="13" height="232"/><rect x="1746" y="121" width="13" height="253"/><rect x="1759" y="135" width="13" height="225"/><rect x="1772" y="135" width="13" height="225"/><rect x="1785" y="146" width="13" height="203"/><rect x="1798" y="157" width="13" height="181"/><rect x="1811" y="160" width="13" height="174"/><rect x="1824" y="164" width="13" height="167"/><rect x="1837" y="168" width="13" height="159"/><rect x="1850" y="171" width="13" height="149"/><rect x="1863" y="171" width="13" height="153"/><rect x="1876" y="179" width="13" height="137"/><rect x="1889" y="171" width="13" height="153"/><rect x="1902" y="157" width="13" height="181"/><rect x="1915" y="171" width="13" height="149"/><rect x="1928" y="160" width="13" height="174"/><rect x="1941" y="175" width="13" height="145"/><rect x="1954" y="157" width="13" height="181"/><rect x="1967" y="153" width="13" height="189"/><rect x="1980" y="157" width="13" height="181"/><rect x="1993" y="168" width="13" height="159"/><rect x="2006" y="164" width="13" height="167"/><rect x="2019" y="150" width="13" height="195"/><rect x="2032" y="168" width="13" height="159"/><rect x="2045" y="168" width="13" height="159"/><rect x="2058" y="160" width="13" height="174"/><rect x="2071" y="164" width="13" height="167"/><rect x="2084" y="171" width="13" height="149"/><rect x="2097" y="171" width="13" height="153"/><rect x="2110" y="164" width="13" height="167"/><rect x="2123" y="175" width="13" height="145"/><rect x="2136" y="182" width="13" height="131"/><rect x="2149" y="186" width="13" height="123"/><rect x="2162" y="182" width="13" height="131"/><rect x="2175" y="171" width="13" height="153"/><rect x="2188" y="175" width="13" height="145"/><rect x="2201" y="189" width="13" height="116"/><rect x="2214" y="186" width="13" height="123"/><rect x="2227" y="189" width="13" height="116"/><rect x="2240" y="197" width="13" height="101"/><rect x="2253" y="189" width="13" height="113"/><rect x="2266" y="189" width="13" height="116"/><rect x="2279" y="193" width="13" height="109"/><rect x="2292" y="193" width="13" height="109"/><rect x="2305" y="189" width="13" height="116"/><rect x="2318" y="197" width="13" height="105"/><rect x="2331" y="197" width="13" height="105"/><rect x="2344" y="193" width="13" height="109"/><rect x="2357" y="189" width="13" height="113"/><rect x="2370" y="193" width="13" height="109"/><rect x="2383" y="197" width="13" height="101"/><rect x="2396" y="204" width="13" height="87"/><rect x="2409" y="211" width="13" height="73"/><rect x="2422" y="218" width="13" height="58"/><rect x="2435" y="229" width="13" height="37"/><rect x="2448" y="240" width="13" height="15"/></clipPath></defs>
<g clip-path="url(#cv)">
<rect x="1655" y="102" width="810" height="29" fill="#e6b8dc"/>
<rect x="1655" y="131" width="810" height="29" fill="#e8e4b8"/>
<rect x="1655" y="160" width="810" height="29" fill="#5cd4c0"/>
<rect x="1655" y="189" width="810" height="116" fill="#82c8f0"/>
<rect x="1655" y="305" width="810" height="29" fill="#5cd4c0"/>
<rect x="1655" y="334" width="810" height="29" fill="#e8e4b8"/>
<rect x="1655" y="363" width="810" height="29" fill="#e6b8dc"/>
</g></svg>
<div class="tx" style="left:1655px;top:421px"><span class="s">======================&gt;</span></div>
<div style="position:absolute;left:1954px;top:435px;width:573px;height:1px;background:#4e5a70;"></div>
<div class="tx" style="left:1655px;top:450px"><span class="w">Playing: </span><span class="a">ffee for your head) </span><span class="X">** </span>  <span class="k">beabadoobee | Powfu   </span><span class="w">[0:57/2:53]</span></div>
<svg style="position:absolute;left:2064px;top:448px" width="28" height="28" viewBox="0 0 28 28"><path fill="#9ccff0" d="M12.1 5 H17.6 L18.4 6.3 H21 V22.6 L19.8 23.8 H15 L14 22.3 L14.7 20.2 L16.8 18.7 H19.3 V8 H17.2 L16.6 6.9 H14.2 V18.6 L12.8 20.8 H8 L7 19 L7.8 16.9 L9.8 15.5 H12.1 Z"/></svg>
<svg style="position:absolute;left:2357px;top:454px" width="12" height="20" viewBox="0 0 12 20"><path d="M1 1 L6.5 10 L1 19 M5 1 L10.5 10 L5 19" fill="none" stroke="#e8d890" stroke-width="1.3"/></svg>
<div class="tx" style="left:1655px;top:882px"><span class="s">======================&gt;</span></div>
<div style="position:absolute;left:1954px;top:896px;width:573px;height:1px;background:#4e5a70;"></div>
<div class="tx" style="left:1655px;top:911px"><span class="w">Playing: </span><span class="a">d (coffee for your head) </span><span class="X">** </span>  <span class="k">beabadoobee | Po </span><span class="w">[0:57/2:53]</span></div>
<svg style="position:absolute;left:2129px;top:909px" width="28" height="28" viewBox="0 0 28 28"><path fill="#9ccff0" d="M12.1 5 H17.6 L18.4 6.3 H21 V22.6 L19.8 23.8 H15 L14 22.3 L14.7 20.2 L16.8 18.7 H19.3 V8 H17.2 L16.6 6.9 H14.2 V18.6 L12.8 20.8 H8 L7 19 L7.8 16.9 L9.8 15.5 H12.1 Z"/></svg>
<div style="position:absolute;left:1830px;top:606px;width:508px;height:175px;border:1px solid #e8e4b8"></div>
<div style="position:absolute;left:1915px;top:621px;width:26px;height:145px;background:#e8e6b8;"></div>
<div style="position:absolute;left:1967px;top:621px;width:78px;height:145px;background:#e8e6b8;"></div>
<div style="position:absolute;left:1993px;top:650px;width:26px;height:29px;background:#121519;"></div>
<div style="position:absolute;left:1993px;top:708px;width:26px;height:29px;background:#121519;"></div>
<div style="position:absolute;left:2227px;top:621px;width:78px;height:145px;background:#e8e6b8;"></div>
<div style="position:absolute;left:2253px;top:650px;width:26px;height:29px;background:#121519;"></div>
<div style="position:absolute;left:2253px;top:708px;width:26px;height:29px;background:#121519;"></div>
<div style="position:absolute;left:2071px;top:650px;width:26px;height:29px;background:#e8e6b8;"></div>
<div style="position:absolute;left:2071px;top:708px;width:26px;height:29px;background:#e8e6b8;"></div>
<div style="position:absolute;left:2175px;top:621px;width:26px;height:145px;background:#e8e6b8;"></div>
<div class="tx" style="left:2032px;top:795px"><span class="y">08/08/24</span></div>
<div style="position:absolute;left:1687px;top:1009px;width:157px;height:320px;border:1.5px solid #c8ccd4;border-radius:6px"></div>
<div style="position:absolute;left:1687px;top:1270px;width:157px;height:1.5px;background:#c8ccd4;"></div>
<div class="tx" style="left:1746px;top:1024px"><span class="w">user</span></div>
<div class="tx" style="left:1863px;top:1024px"><span class="k">tux</span></div>
<div class="tx" style="left:1746px;top:1053px"><span class="w">hname</span></div>
<div class="tx" style="left:1863px;top:1053px"><span class="y">canopus</span></div>
<div class="tx" style="left:1746px;top:1082px"><span class="w">distro</span></div>
<div class="tx" style="left:1863px;top:1082px"><span class="s">NixOS 24.11 (Vicuna)</span></div>
<div class="tx" style="left:1746px;top:1111px"><span class="w">kernel</span></div>
<div class="tx" style="left:1863px;top:1111px"><span class="u">6.9.8-zen1</span></div>
<div class="tx" style="left:1746px;top:1140px"><span class="w">uptime</span></div>
<div class="tx" style="left:1863px;top:1140px"><span class="u">3h 59m</span></div>
<div class="tx" style="left:1746px;top:1169px"><span class="w">shell</span></div>
<div class="tx" style="left:1863px;top:1169px"><span class="l">zsh</span></div>
<div class="tx" style="left:1746px;top:1198px"><span class="w">pkgs</span></div>
<div class="tx" style="left:1863px;top:1198px"><span class="k">1</span></div>
<div class="tx" style="left:1746px;top:1227px"><span class="w">memory</span></div>
<div class="tx" style="left:1863px;top:1227px"><span class="y">1946 | 15394 MiB</span></div>
<div class="tx" style="left:1746px;top:1285px"><span class="w">colors</span></div>
<div style="position:absolute;left:1868px;top:1294px;width:11px;height:11px;border-radius:6px;background:#e8e8e8"></div>
<div style="position:absolute;left:1894px;top:1294px;width:11px;height:11px;border-radius:6px;background:#c8689c"></div>
<div style="position:absolute;left:1920px;top:1294px;width:11px;height:11px;border-radius:6px;background:#e8e4b8"></div>
<div style="position:absolute;left:1946px;top:1294px;width:11px;height:11px;border-radius:6px;background:#5cd4c0"></div>
<div style="position:absolute;left:1972px;top:1294px;width:11px;height:11px;border-radius:6px;background:#82c8f0"></div>
<div style="position:absolute;left:1998px;top:1294px;width:11px;height:11px;border-radius:6px;background:#82c8f0"></div>
<div style="position:absolute;left:2024px;top:1294px;width:11px;height:11px;border-radius:6px;background:#e6b8dc"></div>
<div style="position:absolute;left:2050px;top:1294px;width:11px;height:11px;border-radius:6px;background:#1a1e28"></div>
<svg style="position:absolute;left:1706px;top:1027.5px" width="22" height="22" viewBox="0 0 22 22"><circle cx="10.3" cy="5.8" r="5.3" fill="#e8e4b8"/><path d="M0.9 21.6 C0.9 16.3 4.6 12.5 10.3 12.5 C16 12.5 19.8 16.3 19.8 21.6 Z" fill="#e8e4b8"/></svg>
<svg style="position:absolute;left:1706px;top:1056.5px" width="22" height="22" viewBox="0 0 22 22"><g fill="#e8e4b8"><rect x="0.9" y="3.4" width="9" height="3.2"/><rect x="12.9" y="3.4" width="3.1" height="3.2"/><rect x="0.9" y="9.4" width="15.1" height="3.2"/><rect x="0.9" y="15.4" width="6.1" height="3.2"/><rect x="9.9" y="15.4" width="6.1" height="3.2"/></g></svg>
<svg style="position:absolute;left:1706px;top:1085.5px" width="22" height="22" viewBox="0 0 22 22"><path d="M8.8 1.5 C6 1.5 4.3 3.2 4.2 6.5 L4.3 10 L0.9 13.6 L1.6 14.6 L4 14.4 L4 19.6 H13.6 V14.4 L16.1 14.6 L16.8 13.6 L13.4 10 L13.4 6.5 C13.3 3.2 11.6 1.5 8.8 1.5 Z" fill="#5cd4c0"/><circle cx="8.8" cy="14.4" r="3.3" fill="#101418"/><circle cx="7.1" cy="5.8" r="0.9" fill="#101418"/><circle cx="10.6" cy="5.8" r="0.9" fill="#101418"/><path d="M7.7 7.7 H9.9 L8.8 9.3 Z" fill="#101418"/></svg>
<svg style="position:absolute;left:1706px;top:1114.5px" width="22" height="22" viewBox="0 0 22 22"><rect x="2.5" y="3.5" width="15" height="10" rx="1" fill="none" stroke="#82c8f0" stroke-width="2"/><rect x="0" y="16" width="21" height="2.2" fill="#82c8f0"/></svg>
<svg style="position:absolute;left:1706px;top:1143.5px" width="22" height="22" viewBox="0 0 22 22"><circle cx="11" cy="11" r="9.3" fill="none" stroke="#82c8f0" stroke-width="2"/><path d="M11 5 V11 L15 14" fill="none" stroke="#82c8f0" stroke-width="2"/></svg>
<svg style="position:absolute;left:1706px;top:1172.5px" width="22" height="22" viewBox="0 0 22 22"><rect x="1" y="2.5" width="20" height="17" rx="1.5" fill="none" stroke="#e6b8dc" stroke-width="2"/><path d="M5 7 L9 10.5 L5 14 M10 15 H16" fill="none" stroke="#e6b8dc" stroke-width="1.8"/></svg>
<svg style="position:absolute;left:1706px;top:1201.5px" width="22" height="22" viewBox="0 0 22 22"><path d="M10.3 2.5 L19.2 7.8 V14.8 L10.3 19.3 L2.3 14.8 V8.5 L1.3 7.8 Z M10.3 8.6 V19.3 M11.5 12.2 L18.6 8.6" fill="none" stroke="#c8689c" stroke-width="1.8" stroke-linejoin="round"/><polygon points="10.3,2.5 1.3,7.8 2.3,8.6 10.3,8.6" fill="#c8689c"/></svg>
<svg style="position:absolute;left:1706px;top:1230.5px" width="22" height="22" viewBox="0 0 22 22"><rect x="3.7" y="5.8" width="10.3" height="10.3" fill="none" stroke="#e8e4b8" stroke-width="2"/><rect x="6.9" y="9" width="3.9" height="3.9" fill="none" stroke="#e8e4b8" stroke-width="1.7"/><g stroke="#e8e4b8" stroke-width="1.7"><path d="M7.2 2.5 V4.8 M10.6 2.5 V4.8 M7.2 17.1 V19.4 M10.6 17.1 V19.4 M0.8 9.2 H2.7 M0.8 12.8 H2.7 M15 9.2 H17 M15 12.8 H17"/></g></svg>
<svg style="position:absolute;left:1706px;top:1288.5px" width="22" height="22" viewBox="0 0 22 22"><path d="M9 2.7 C13.5 2.7 17 6 17 10 C17 12.6 15.4 13.9 12.8 13.9 H10.4 V18.8 C4.6 18.6 0.9 15 0.9 10.6 C0.9 6 4.5 2.7 9 2.7 Z" fill="#e8eaee"/><circle cx="6.6" cy="6.1" r="1.15" fill="#101418"/><circle cx="11" cy="6.1" r="1.15" fill="#101418"/><circle cx="4" cy="9.7" r="1.15" fill="#101418"/><circle cx="13.7" cy="9.7" r="1.15" fill="#101418"/></svg>
<svg style="position:absolute;left:1655px;top:1377px" width="17" height="19" viewBox="0 0 17 19"><path d="M0 8 C0 3.4 3.6 0.2 8 0.2 C12.4 0.2 16 3.4 16 8 V18 L13.2 15.6 L10.6 18 L8 15.6 L5.4 18 L2.8 15.6 L0 18 Z" fill="#5cd4c0"/><circle cx="5.2" cy="7.6" r="1.6" fill="#0f1316"/><circle cx="10.4" cy="7.6" r="1.6" fill="#0f1316"/></svg>
<svg style="position:absolute;left:1681px;top:1378px" width="19" height="17" viewBox="0 0 19 17"><path d="M1 8.5 H17 M10 1.5 L17 8.5 L10 15.5" fill="none" stroke="#5cd4c0" stroke-width="1.6"/></svg>
<div class="tx" style="left:1707px;top:1372px"><span class="s">canopus </span><span class="u">~</span></div>
<svg style="position:absolute;left:1839px;top:1379px" width="8" height="16" viewBox="0 0 8 16"><polygon points="0,0 3,0 7.5,8 3,16 0,16 4.5,8" fill="#e8e4b8"/></svg>
<svg style="position:absolute;left:1852px;top:1379px" width="8" height="16" viewBox="0 0 8 16"><polygon points="0,0 3,0 7.5,8 3,16 0,16 4.5,8" fill="#e6b8dc"/></svg>
<svg style="position:absolute;left:1865px;top:1379px" width="8" height="16" viewBox="0 0 8 16"><polygon points="0,0 3,0 7.5,8 3,16 0,16 4.5,8" fill="#9ccff0"/></svg>
<div style="position:absolute;left:1889px;top:1372px;width:13px;height:29px;border:1.5px solid #8a90b0"></div>
</body></html>
